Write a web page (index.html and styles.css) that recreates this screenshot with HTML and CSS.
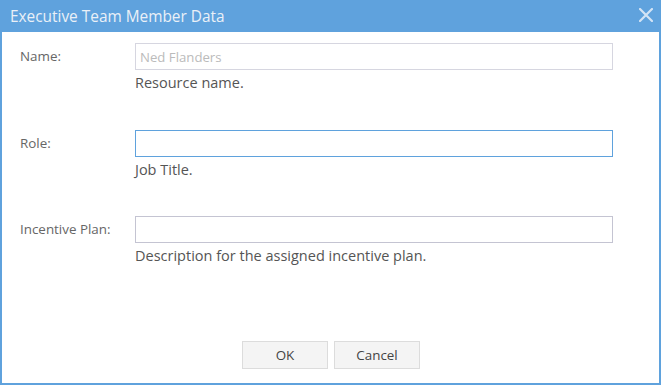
FILE: index.html
```html
<!DOCTYPE html>
<html lang="en">

<head>
    <meta charset="UTF-8">
    <title>Executive Team Member Data</title>
    <link rel="stylesheet" href="styles.css">
</head>

<body>
    <div class="dialog">
        <div class="dialog_head">
            <span class="dialog_title">Executive Team Member Data</span>
            <svg class="dialog_close" width="14" height="14" viewBox="0 0 14 14">
                <path d="M1 1 L13 13 M13 1 L1 13" stroke="#d3e4f5" stroke-width="2.2" stroke-linecap="round"/>
            </svg>
        </div>
        <div class="dialog_body">
            <div class="field">
                <label class="field_label">Name:</label>
                <div class="field_main">
                    <input type="text" class="field_input" value="Ned Flanders" disabled>
                    <div class="field_help">Resource name.</div>
                </div>
            </div>
            <div class="field">
                <label class="field_label">Role:</label>
                <div class="field_main">
                    <input type="text" class="field_input focus">
                    <div class="field_help">Job Title.</div>
                </div>
            </div>
            <div class="field">
                <label class="field_label">Incentive Plan:</label>
                <div class="field_main">
                    <input type="text" class="field_input">
                    <div class="field_help">Description for the assigned incentive plan.</div>
                </div>
            </div>
        </div>
        <div class="dialog_foot">
            <button class="btn">OK</button>
            <button class="btn">Cancel</button>
        </div>
    </div>
</body>

</html>
```

FILE: styles.css
```css
* {
    box-sizing: border-box;
}

body {
    margin: 0;
    font-family: "Open Sans", "Liberation Sans", sans-serif;
    color: #555555;
}

.dialog {
    width: 661px;
    height: 385px;
    border: 2px solid #5fa2dd;
    border-top: none;
    display: flex;
    flex-direction: column;
    background-color: white;
}

.dialog_head {
    height: 32px;
    margin: 0 -2px;
    padding: 0 8px 0 10px;
    background-color: #5fa2dd;
    display: flex;
    align-items: center;
    justify-content: space-between;
}

.dialog_title {
    color: #eaf0f7;
    font-size: 15.4px;
}

.dialog_close {
    display: block;
    margin-bottom: 2px;
}

.dialog_body {
    flex: 1;
    padding: 11px 46px 0 18px;
}

.field {
    display: flex;
    height: 86.5px;
}

.field_label {
    width: 115px;
    height: 27px;
    line-height: 27px;
    font-size: 13.4px;
    color: #666666;
}

.field_main {
    flex: 1;
}

.field_input {
    display: block;
    width: 100%;
    height: 27px;
    border: 1px solid #c4c4d2;
    padding: 0 4px;
    font-family: inherit;
    font-size: 13.2px;
    background-color: white;
    color: #bbbbbb;
}

.field_input:disabled {
    border-color: #d6d6e0;
}

.field_input.focus {
    border-color: #5fa2dd;
}

.field_help {
    margin-top: 4px;
    font-size: 14.5px;
    line-height: 18px;
}

.dialog_foot {
    display: flex;
    justify-content: center;
    gap: 6px;
    padding: 0 0 14px 1px;
}

.btn {
    width: 86px;
    height: 28px;
    border: 1px solid #dcdcdc;
    background-color: #f4f4f4;
    font-family: inherit;
    font-size: 13.4px;
    color: #444444;
}
```
